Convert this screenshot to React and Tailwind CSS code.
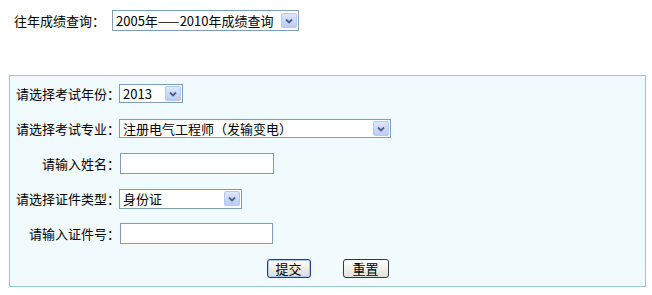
import React from 'react';

function Arrow() {
  return (
    <span className="flex h-[15px] w-[16px] shrink-0 items-center justify-center rounded-[2px] border border-[#b7c8ee] bg-gradient-to-b from-[#dce6fd] to-[#bccdf7]">
      <svg width="8" height="6" viewBox="0 0 8 6">
        <path d="M1 1.5 L4 4.5 L7 1.5" fill="none" stroke="#4d6185" strokeWidth="1.8" />
      </svg>
    </span>
  );
}

function FakeSelect({ value, className }) {
  return (
    <div className={`flex items-center justify-between border border-[#7f9db9] bg-white pl-[3px] pr-[1px] ${className}`}>
      <span className="whitespace-nowrap leading-[16px]">{value}</span>
      <Arrow />
    </div>
  );
}

function Row({ label, children }) {
  return (
    <div className="flex h-[35px] items-center">
      <div className="w-[110px] shrink-0 text-right">{label}</div>
      <div className="flex items-center">{children}</div>
    </div>
  );
}

export default function App() {
  return (
    <div className="h-[295px] w-[652px] bg-white text-[13px] text-black font-['Noto_Sans_CJK_SC','Liberation_Sans',sans-serif]">
      {/* history query */}
      <div className="flex items-center pl-[14px] pt-[10px]">
        <span className="w-[98px]">往年成绩查询：</span>
        <FakeSelect value="2005年——2010年成绩查询" className="h-[21px] w-[187px]" />
      </div>

      {/* query form */}
      <div className="ml-[9px] mt-[44px] h-[212px] w-[637px] border border-[#9cc6d0] bg-[#f1fafd]">
        <Row label="请选择考试年份：">
          <FakeSelect value="2013" className="-ml-px h-[19px] w-[64px]" />
        </Row>
        <Row label="请选择考试专业：">
          <FakeSelect value="注册电气工程师（发输变电）" className="-ml-px h-[19px] w-[272px]" />
        </Row>
        <Row label="请输入姓名：">
          <div className="h-[21px] w-[154px] border border-[#7f9db9] bg-white" />
        </Row>
        <Row label="请选择证件类型：">
          <FakeSelect value="身份证" className="-ml-px h-[20px] w-[123px]" />
        </Row>
        <Row label="请输入证件号：">
          <div className="h-[21px] w-[153px] border border-[#7f9db9] bg-white" />
        </Row>
        <div className="flex h-[35px] items-center justify-center gap-[32px]">
          <button className="flex h-[19px] w-[44px] items-center justify-center rounded-[3px] border border-[#1c3f7c] bg-gradient-to-b from-[#ffffff] to-[#dcdbd3] leading-none shadow-[inset_0_0_0_1px_#b5c9f0]">
            提交
          </button>
          <button className="flex h-[19px] w-[46px] items-center justify-center rounded-[3px] border border-[#2a3a4a] bg-gradient-to-b from-[#ffffff] to-[#e2e0d8] leading-none">
            重置
          </button>
        </div>
      </div>
    </div>
  );
}
